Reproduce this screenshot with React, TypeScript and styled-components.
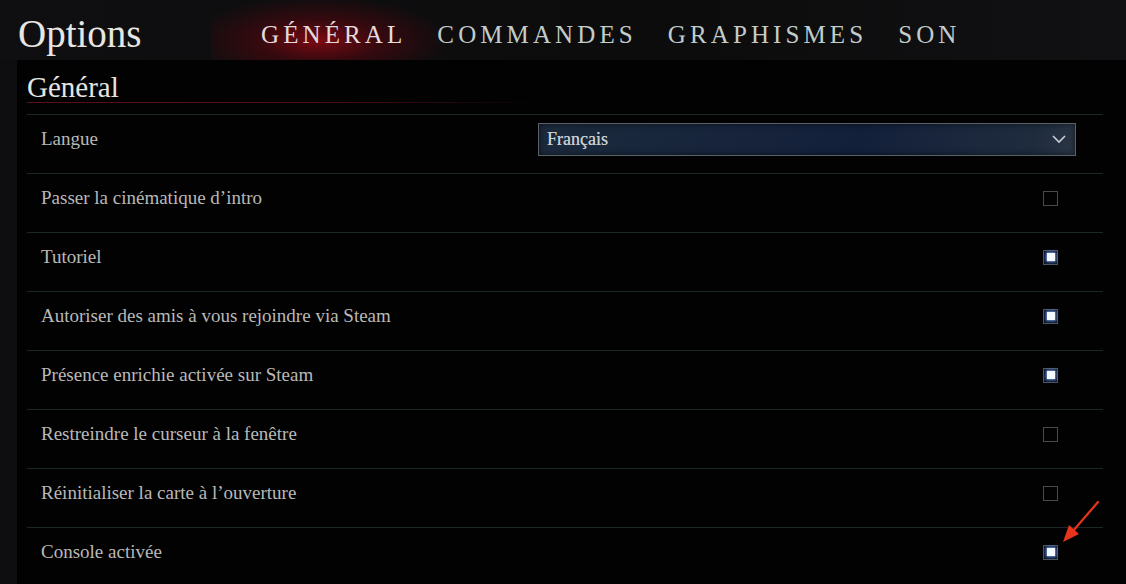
import React from 'react';
import styled, { createGlobalStyle } from 'styled-components';

const GlobalStyle = createGlobalStyle`
  html, body {
    margin: 0;
    padding: 0;
    background: #0e0e10;
  }
  body {
    font-family: "Liberation Serif", "DejaVu Serif", serif;
    overflow: hidden;
  }
`;

interface Setting {
  label: string;
  kind: 'select' | 'check';
  value?: string;
  checked?: boolean;
}

const settings: Setting[] = [
  { label: 'Langue', kind: 'select', value: 'Français' },
  { label: 'Passer la cinématique d’intro', kind: 'check', checked: false },
  { label: 'Tutoriel', kind: 'check', checked: true },
  { label: 'Autoriser des amis à vous rejoindre via Steam', kind: 'check', checked: true },
  { label: 'Présence enrichie activée sur Steam', kind: 'check', checked: true },
  { label: 'Restreindre le curseur à la fenêtre', kind: 'check', checked: false },
  { label: 'Réinitialiser la carte à l’ouverture', kind: 'check', checked: false },
  { label: 'Console activée', kind: 'check', checked: true },
];

const tabs = ['GÉNÉRAL', 'COMMANDES', 'GRAPHISMES', 'SON'];

const Screen = styled.div`
  width: 1126px;
  height: 584px;
  position: relative;
  background: #0e0e10;
  overflow: hidden;
`;

const Header = styled.header`
  height: 60px;
  display: flex;
  align-items: center;
  padding-left: 18px;
  overflow: hidden;
  background: linear-gradient(90deg, #0f0f11 0%, #0c0c0d 60%, #111113 100%);
`;

const Title = styled.h1`
  margin: 0;
  width: 243px;
  font-size: 39px;
  font-weight: normal;
  color: #e8e6e2;
  line-height: 1;
  margin-top: 6px;
`;

const Tabs = styled.nav`
  display: flex;
  gap: 31px;
  height: 100%;
  align-items: center;
`;

const Tab = styled.span<{ $active?: boolean }>`
  position: relative;
  font-size: 25px;
  letter-spacing: 4.1px;
  color: ${(p) => (p.$active ? '#e4dcdc' : '#c2ccca')};
  line-height: 1;
  margin-top: 8px;

  /* red glow behind the selected tab */
  &::before {
    content: '';
    display: ${(p) => (p.$active ? 'block' : 'none')};
    position: absolute;
    left: -50px;
    right: -45px;
    top: -26px;
    bottom: -30px;
    background: radial-gradient(
      ellipse at 45% 55%,
      rgba(150, 8, 20, 0.8) 0%,
      rgba(95, 5, 14, 0.5) 32%,
      rgba(20, 0, 0, 0) 70%
    );
    z-index: 0;
  }
`;

const TabText = styled.span`
  position: relative;
  z-index: 1;
`;

const Panel = styled.main`
  margin-left: 17px;
  height: 524px;
  background: #020203;
  padding: 0 23px 0 10px;
`;

const SectionTitle = styled.h2`
  margin: 0;
  padding-top: 12px;
  font-size: 29px;
  font-weight: normal;
  color: #e6e4e0;
  line-height: 30px;
  height: 31px;
  background: linear-gradient(90deg, #5a0f1a 0%, #4a0c15 60%, rgba(40, 8, 12, 0) 100%)
    bottom left / 515px 1px no-repeat;
`;

const List = styled.div`
  margin-top: 11px;
`;

const Row = styled.div`
  height: 58px;
  display: flex;
  align-items: center;
  justify-content: space-between;
  border-top: 1px solid #1b2628;
  padding-left: 14px;
`;

const Label = styled.span`
  font-size: 19px;
  color: #b9b9b7;
  margin-top: -10px;
`;

const Select = styled.div`
  width: 538px;
  height: 33px;
  margin-right: 27px;
  margin-top: -10px;
  box-sizing: border-box;
  border: 1px solid #5a6068;
  background: linear-gradient(100deg, #1c2a3d 0%, #13203a 60%, #1f2c3e 92%, #2a3646 100%);
  display: flex;
  align-items: center;
  justify-content: space-between;
  padding: 0 8px;
  box-shadow: inset 0 0 6px rgba(0, 0, 0, 0.6);
`;

const SelectValue = styled.span`
  font-size: 18px;
  color: #c8ccd0;
  text-shadow: 0 0 0.4px #c8ccd0;
`;

const Box = styled.span<{ $checked?: boolean }>`
  width: 15px;
  height: 15px;
  box-sizing: border-box;
  margin-right: 45px;
  margin-top: -10px;
  border: 1.5px solid ${(p) => (p.$checked ? '#4c5462' : '#4a4a4a')};
  display: flex;
  align-items: center;
  justify-content: center;
  background: ${(p) => (p.$checked ? '#0a1020' : 'transparent')};

  &::after {
    content: '';
    display: ${(p) => (p.$checked ? 'block' : 'none')};
    width: 8px;
    height: 8px;
    background: #f4f8ff;
    box-shadow: 0 0 3px 1px rgba(120, 170, 255, 0.9);
  }
`;

const Arrow = styled.svg`
  position: absolute;
  left: 1058px;
  top: 498px;
`;

const Chevron = () => (
  <svg width="16" height="10" viewBox="0 0 16 10" fill="none">
    <path d="M2 2 L8 8 L14 2" stroke="#c8ccd2" strokeWidth="1.6" />
  </svg>
);

export default function App() {
  return (
    <Screen>
      <GlobalStyle />
      <Header>
        <Title>Options</Title>
        <Tabs>
          {tabs.map((t, i) => (
            <Tab key={t} $active={i === 0}>
              <TabText>{t}</TabText>
            </Tab>
          ))}
        </Tabs>
      </Header>
      <Panel>
        <SectionTitle>Général</SectionTitle>
        <List>
          {settings.map((s) => (
            <Row key={s.label}>
              <Label>{s.label}</Label>
              {s.kind === 'select' ? (
                <Select>
                  <SelectValue>{s.value}</SelectValue>
                  <Chevron />
                </Select>
              ) : (
                <Box $checked={s.checked} />
              )}
            </Row>
          ))}
        </List>
      </Panel>
      <Arrow width="46" height="50" viewBox="0 0 46 50">
        <path d="M40 4 L15 33" stroke="#e8341c" strokeWidth="2.2" strokeLinecap="round" />
        <path d="M5 44 L11 27 L21 36 Z" fill="#e8341c" />
      </Arrow>
    </Screen>
  );
}
